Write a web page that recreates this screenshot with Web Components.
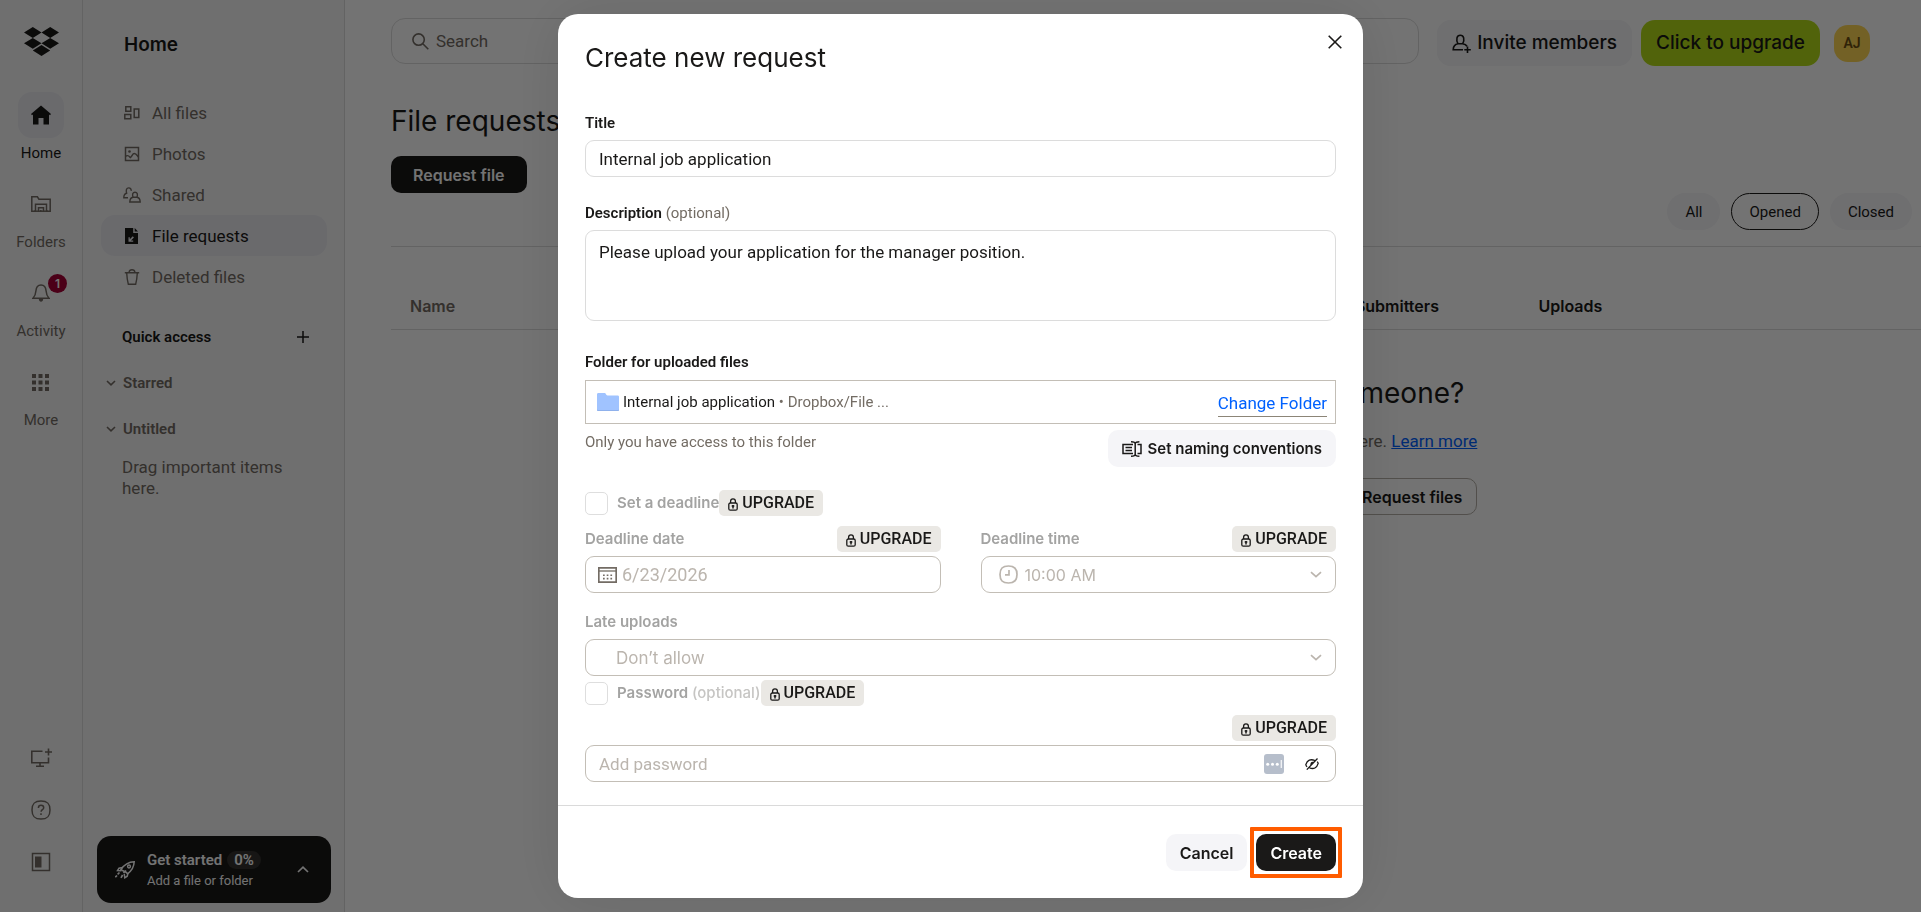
<!DOCTYPE html>
<html lang="en">
<head>
<meta charset="utf-8">
<title>File requests - Dropbox</title>
<style>
  html, body {
    height: 100%;
    margin: 0;
  }

  body {
    --display: Inter, "Liberation Sans", sans-serif;
    --text: Roboto, "Liberation Sans", sans-serif;
    --ink: #1a1918;
    --muted: #736c64;
    --faint: #bbb5ae;
    --line: #dcdcdc;
    --line-strong: #c3beb6;
    --blue: #0061fe;
    --wash: #f5f5f8;

    overflow: hidden;
    color: var(--ink);
    font: 17px/20px var(--text);
  }
</style>
</head>
<body>
<file-requests-app></file-requests-app>

<script>
const ICONS = {
  logo: `<svg viewBox="0 0 35 29" width="35" height="29" fill="currentColor"><path d="M8.800 0 17.500 5.500 8.800 11 0 5.500zM26.200 0 35 5.500 26.200 11 17.500 5.500zM0 16.300 8.800 10.900 17.500 16.300 8.800 21.800zM26.200 10.900 35 16.300 26.200 21.800 17.500 16.300zM8.800 23.600 17.500 18.100 26.200 23.600 17.500 29z"/></svg>`,
  home: `<svg viewBox="0 0 20 20" width="20" height="20" fill="currentColor"><path d="M10 .5 20 9l-1 1.300-1-.8V19.500h-5.500V13h-5v6.500H2V9.500l-1 .8L0 9z"/></svg>`,
  folders: `<svg viewBox="0 0 20 16" width="20" height="16" fill="none" stroke="currentColor" stroke-width="1.500"><path d="M4 15.200H.8V.8h5.600l1.500 2.400h11.300v12H16"/><path d="M4.500 16V8.200h11V16M7.500 16v-4.300h5V16M9.800 16v-2"/><path d="M3 15.200h14"/></svg>`,
  bell: `<svg viewBox="0 0 18 18" width="18" height="18" fill="none" stroke="currentColor" stroke-width="1.500"><path d="M1 14.200c1.700-1.600 2.600-3 2.900-7.200C4.200 2.800 6 .9 9 .9S13.800 2.800 14.100 7c.3 4.200 1.200 5.600 2.900 7.200z"/><path d="M6.800 15h4.400c-.2 1.800-1 2.700-2.200 2.700S7 16.800 6.800 15z" fill="currentColor" stroke="none"/></svg>`,
  grid: `<svg viewBox="0 0 17 17" width="17" height="17" fill="currentColor"><path d="M0 0h4v4H0zM6.500 0h4v4h-4zM13 0h4v4h-4zM0 6.500h4v4H0zM6.500 6.500h4v4h-4zM13 6.500h4v4h-4zM0 13h4v4H0zM6.500 13h4v4h-4zM13 13h4v4h-4z"/></svg>`,
  screen: `<svg viewBox="0 0 22 20" width="22" height="20" fill="none" stroke="currentColor" stroke-width="1.600"><path d="M12.500 3.300H1.800v11.400h16.700V9.500"/><path d="M10 14.700v3M6 18.200h8M18.500.5v7M15 4h7"/></svg>`,
  help: `<svg viewBox="0 0 20 20" width="20" height="20" fill="none" stroke="currentColor" stroke-width="1.500"><path d="M10 1c6.500 0 9 2.500 9 9s-2.500 9-9 9-9-2.500-9-9 2.500-9 9-9z"/><path d="M7.400 8c0-1.700 1-2.700 2.600-2.700s2.700.9 2.700 2.400c0 2-2.600 2-2.600 4.100M10 13.300v1.700"/></svg>`,
  panel: `<svg viewBox="0 0 20 20" width="20" height="20"><path d="M1.500 1.500h17v17h-17z" fill="none" stroke="currentColor" stroke-width="1.500"/><path d="M4 4.500h6.500v11H4z" fill="currentColor"/></svg>`,
  files: `<svg viewBox="0 0 16 14" width="16" height="14" fill="none" stroke="currentColor" stroke-width="1.500"><path d="M1.800.8h5v4.400h-5zM.8 8.600h6v4.200h-6zM10.200 3h4.600v8.500h-4.600z"/></svg>`,
  photos: `<svg viewBox="0 0 16 16" width="16" height="16" fill="none" stroke="currentColor" stroke-width="1.500"><path d="M1.500 1.500h13v13h-13zM1.500 10.500c2.500-2 3.500-.5 4.800 1 2-1.200 2-4 4-4s2.500 1.500 4 3.500"/><circle cx="5.500" cy="5.500" r="1.300" fill="currentColor" stroke="none"/></svg>`,
  shared: `<svg viewBox="0 0 18 16" width="18" height="16" fill="none" stroke="currentColor" stroke-width="1.400"><path d="M5 10.700H.8C.8 8 1.700 6.600 3.600 6.200 2.800 3 3.500.9 5.700.9c1.800 0 2.600 1.200 2.500 3"/><path d="M10 10.300C9 7 9.800 5.200 12 5.200s3 1.800 2 5.100c2.200.3 3.100 1.700 3.200 4.700H6.800c.1-3 1-4.400 3.200-4.700zM10 10.300h4"/></svg>`,
  request: `<svg viewBox="0 0 14 16" width="14" height="16" fill="currentColor"><path fill-rule="evenodd" d="M0 0h8.200v5H13v11H0zM7.800 8.300 4.800 11.300V9.200H3.500v4.600h4.700v-1.300H6L8.900 9.400z"/><path d="M9.700 0 13 3.500H9.700z"/></svg>`,
  trash: `<svg viewBox="0 0 16 16" width="16" height="16" fill="none" stroke="currentColor" stroke-width="1.400"><path d="M.8 3.700h14.400M5 3.500C5.300 1.600 6 .8 8 .8s2.700.8 3 2.700M2.700 4c.2 4 .8 8 1.600 11.200h7.400C12.500 12 13.100 8 13.300 4"/></svg>`,
  plus: `<svg viewBox="0 0 12 12" width="12" height="12" fill="none" stroke="currentColor" stroke-width="1.500"><path d="M6 0v12M0 6h12"/></svg>`,
  down: `<svg viewBox="0 0 10 6" width="10" height="6" fill="none" stroke="currentColor" stroke-width="1.600"><path d="m1 1 4 3.800L9 1"/></svg>`,
  up: `<svg viewBox="0 0 12 7" width="12" height="7" fill="none" stroke="currentColor" stroke-width="1.700"><path d="m1 6 5-4.800L11 6"/></svg>`,
  rocket: `<svg viewBox="0 0 20 18" width="20" height="18" fill="none" stroke="currentColor" stroke-width="1.500"><path d="M6 8.500C9 4 13.500 1 19.200.8 19 6 16.500 10 12.500 12.800L11 11.200 8 9.800z"/><path d="M7.500 6.500 4 7.200 2.500 9.500l4 .3M13 12l-.8 3.200-2.400 1.600-.6-4"/><circle cx="14" cy="5.500" r="1.400"/><path d="M11 9.500 8.500 12M4.500 11.500 2.600 13.300M2 14.500.3 16.200M7.600 14 6 16.800" stroke-width="1.700"/></svg>`,
  search: `<svg viewBox="0 0 17 17" width="17" height="17" fill="none" stroke="currentColor" stroke-width="1.600"><circle cx="6.600" cy="6.600" r="5.700"/><path d="m10.800 10.800 5.500 5.500"/></svg>`,
  invite: `<svg viewBox="0 0 19 19" width="19" height="19" fill="none" stroke="currentColor" stroke-width="1.600"><path d="M11 15.700H1.200C1.300 12 2.600 10.400 6 9.800 3.700 5.500 4.800 1.200 8.300 1.200s4.700 4.300 2.300 8.600c2.200.4 3.500 1 4.400 2.400M6 9.800h4.600M15.500 12.500V19M12.300 15.700h6.500"/></svg>`,
  close: `<svg viewBox="0 0 14 14" width="14" height="14" fill="none" stroke="currentColor" stroke-width="1.600"><path d="m.7.7 12.600 12.600M13.300.7.7 13.300"/></svg>`,
  folder: `<svg viewBox="0 0 22 18" width="22" height="18"><path d="M0 1.500C0 .5.500 0 1.500 0h6c.8 0 1 .5 1.500 1.300.4.700.7 1.200 1.500 1.200h10c1 0 1.500.5 1.500 1.500v12.500c0 1-.5 1.500-1.500 1.500h-19C.5 18 0 17.500 0 16.500z" fill="#a0c3ff"/><path d="M0 16v.500c0 1 .5 1.500 1.500 1.500h19c1 0 1.500-.5 1.500-1.500V16c0 .7-.5 1-1.500 1h-19C.5 17 0 16.700 0 16z" fill="#8fb1ec"/></svg>`,
  naming: `<svg viewBox="0 0 20 16" width="20" height="16" fill="none" stroke="currentColor" stroke-width="1.500"><path d="M11 12.500H1v-9h10M3.500 6.500H10M3.500 9.500H10M15.500 3.500H19v9h-3.500"/><path d="M9 .8c2.500 0 4.200.4 4.200 2v10.400c0 1.600-1.700 2-4.200 2M17.400.8c-2.500 0-4.200.4-4.200 2v10.400c0 1.600 1.700 2 4.200 2"/></svg>`,
  lock: `<svg viewBox="0 0 10 13" width="10" height="13" fill="none" stroke="currentColor" stroke-width="1.300"><rect x=".8" y="5" width="8.400" height="7.200" rx="1.500"/><path d="M2.600 5V3.300C2.600 1.600 3.400.8 5 .8s2.400.8 2.400 2.500V5"/><path d="M5 7v3.500M3.700 8.100h2.600" stroke-width="1.500"/></svg>`,
  calendar: `<svg viewBox="0 0 19 16" width="19" height="16" fill="none" stroke="currentColor" stroke-width="1.700"><path d="M.8.8h17.400v14.400H.8z"/><path d="M.8 4h17.400" stroke-width="1.300"/><path d="M5 8.300h9.500M5 11.600h9.500" stroke-width="1.600" stroke-dasharray="1.700 2"/></svg>`,
  clock: `<svg viewBox="0 0 19 19" width="19" height="19" fill="none" stroke="currentColor" stroke-width="1.700"><path d="M9.500 1c6 0 8.500 2.500 8.500 8.500s-2.500 8.500-8.500 8.500S1 15.500 1 9.500 3.500 1 9.500 1z"/><path d="M10 5v4.800H6"/></svg>`,
  chevron: `<svg viewBox="0 0 12 8" width="12" height="8" fill="none" stroke="currentColor" stroke-width="1.700"><path d="m1 1.200 5 4.500 5-4.500"/></svg>`,
  dots: `<svg viewBox="0 0 20 20" width="20" height="20"><rect width="20" height="20" rx="3" fill="#b6becb"/><g fill="#fff"><circle cx="3.700" cy="10.200" r="1.500"/><circle cx="8.500" cy="10.200" r="1.500"/><circle cx="13.300" cy="10.200" r="1.500"/><path d="M16.700 6h1.100v8h-1.100z"/></g></svg>`,
  hidden: `<svg viewBox="0 0 14 12" width="14" height="12" fill="none" stroke="currentColor" stroke-width="1.300"><path d="M10 2.500C5.500.8 2.300 2 .8 6.600c.3 1 .7 1.700 1.300 2.300M4.500 9.900c4.200 1.500 7.300.2 8.700-4.500-.2-.6-.6-1.200-1-1.700M1.800 11.600 12.500.5"/><path d="M8.800 4 5.500 7.500C4.800 5 6.500 3.200 8.800 4z" fill="currentColor" stroke="none"/></svg>`
};

class BaseElement extends HTMLElement {
  connectedCallback() {
    if (this.shadowRoot) return;
    this.attachShadow({ mode: "open" });
    this.shadowRoot.innerHTML = `
      <style>
        * { box-sizing: border-box; }
        svg { display: block; flex: none; }
        button, input, select, textarea { font: inherit; color: inherit; margin: 0; }
        button { cursor: pointer; }
        ${this.css()}
      </style>
      ${this.template()}
    `;
  }

  attr(name) {
    return this.getAttribute(name) || "";
  }

  css() { return ""; }
  template() { return "<slot></slot>"; }
}

class AppIcon extends BaseElement {
  css() { return ":host { display: block; flex: none; }"; }
  template() { return ICONS[this.attr("name")].replace("<svg", '<svg aria-hidden="true"'); }
}

class AppButton extends BaseElement {
  css() {
    return `
      :host { display: block; flex: none; }
      button {
        display: flex;
        align-items: center;
        gap: 6px;
        height: 37px;
        padding: 0 14px;
        border: 0;
        border-radius: 10px;
        background: var(--wash);
        color: var(--ink);
        font: 600 16px/20px var(--display);
        white-space: nowrap;
      }
      .primary { background: var(--ink); color: #fff; }
      .wide { padding: 0 22px; }
      .outline { background: none; border: 1px solid #b5b0a8; }
      .small { font-size: 15px; }
      .large { height: 46px; padding: 0 15px; border-radius: 14px; font-size: 19px; font-weight: 500; }
      .lime { background: #b4dc19; }
    `;
  }

  template() {
    return `<button type="button" class="${this.attr("kind")}"><slot name="icon"></slot><slot></slot></button>`;
  }
}

class RailItem extends BaseElement {
  css() {
    return `
      :host { display: block; }
      a {
        display: flex;
        flex-direction: column;
        align-items: center;
        gap: 5px;
        color: var(--muted);
        font-size: 15px;
        text-decoration: none;
      }
      .box {
        position: relative;
        display: grid;
        place-items: center;
        width: 46px;
        height: 46px;
        border-radius: 14px;
      }
      .active { color: var(--ink); }
      .active .box { background: #ebebf0; }
      .badge {
        position: absolute;
        top: 4px;
        right: -3px;
        width: 19px;
        border-radius: 50%;
        background: #a60035;
        color: #fff;
        font: 600 12px/19px var(--display);
        text-align: center;
      }
    `;
  }

  template() {
    const badge = this.hasAttribute("badge") ? `<span class="badge">${this.attr("badge")}</span>` : "";
    return `
      <a href="#" class="${this.hasAttribute("active") ? "active" : ""}">
        <span class="box"><app-icon name="${this.attr("icon")}"></app-icon>${badge}</span>
        <slot></slot>
      </a>
    `;
  }
}

class AppRail extends BaseElement {
  css() {
    return `
      :host {
        display: flex;
        flex-direction: column;
        align-items: center;
        width: 83px;
        padding: 27px 0 38px;
        border-right: 1px solid var(--line);
        background: #f7f7f7;
        box-sizing: border-box;
      }
      nav { display: grid; gap: 18px; margin-top: 36px; }
      .tools { display: grid; gap: 28px; margin-top: auto; }
      .tools button {
        display: grid;
        place-items: center;
        width: 24px;
        height: 24px;
        padding: 0;
        border: 0;
        background: none;
        color: var(--muted);
      }
    `;
  }

  template() {
    return `
      <app-icon name="logo"></app-icon>
      <nav>
        <rail-item icon="home" active>Home</rail-item>
        <rail-item icon="folders">Folders</rail-item>
        <rail-item icon="bell" badge="1">Activity</rail-item>
        <rail-item icon="grid">More</rail-item>
      </nav>
      <div class="tools">
        <button type="button" aria-label="Install app"><app-icon name="screen"></app-icon></button>
        <button type="button" aria-label="Help"><app-icon name="help"></app-icon></button>
        <button type="button" aria-label="Toggle sidebar"><app-icon name="panel"></app-icon></button>
      </div>
    `;
  }
}

class NavItem extends BaseElement {
  css() {
    return `
      :host { display: block; }
      a {
        display: flex;
        align-items: center;
        gap: 11px;
        height: 41px;
        padding-left: 22px;
        border-radius: 14px;
        color: var(--muted);
        text-decoration: none;
      }
      .icon { display: grid; place-items: center; width: 18px; }
      .active { background: #ebebf0; color: var(--ink); }
    `;
  }

  template() {
    return `
      <a href="#" class="${this.hasAttribute("active") ? "active" : ""}">
        <span class="icon"><app-icon name="${this.attr("icon")}"></app-icon></span>
        <slot></slot>
      </a>
    `;
  }
}

class GetStarted extends BaseElement {
  css() {
    return `
      :host { display: block; }
      button {
        display: flex;
        align-items: center;
        gap: 12px;
        width: 100%;
        height: 67px;
        padding: 0 22px 0 18px;
        border: 0;
        border-radius: 14px;
        background: var(--ink);
        color: #fff;
        text-align: left;
      }
      .copy { flex: 1; display: grid; gap: 4px; }
      .head { display: flex; gap: 5px; font-weight: 600; font-size: 15px; line-height: 18px; }
      .pill { padding: 0 7px; border-radius: 9px; background: #33322f; }
      small { font-size: 13px; line-height: 16px; }
    `;
  }

  template() {
    return `
      <button type="button">
        <app-icon name="rocket"></app-icon>
        <span class="copy">
          <span class="head"><span>Get started</span><span class="pill">0%</span></span>
          <small>Add a file or folder</small>
        </span>
        <app-icon name="up"></app-icon>
      </button>
    `;
  }
}

class AppSidebar extends BaseElement {
  css() {
    return `
      :host {
        display: flex;
        flex-direction: column;
        width: 262px;
        padding: 33px 13px 9px 14px;
        border-right: 1px solid var(--line);
        background: #f7f7f7;
        box-sizing: border-box;
      }
      h1 { margin: 0 0 35px 27px; font: 600 19px/24px var(--display); }
      nav { margin: 0 4px; }
      .quick {
        display: flex;
        align-items: center;
        justify-content: space-between;
        margin: 30px 22px 0 25px;
        font-size: 15px;
        font-weight: 600;
      }
      h2 { margin: 0; font: inherit; }
      button { padding: 0; border: 0; background: none; }
      .group {
        display: flex;
        align-items: center;
        gap: 7px;
        margin: 26px 0 0 9px;
        color: var(--muted);
        font-size: 15px;
        font-weight: 600;
      }
      p { margin: 18px 25px 0; color: var(--muted); line-height: 21px; }
      get-started { margin-top: auto; }
    `;
  }

  template() {
    return `
      <h1>Home</h1>
      <nav>
        <nav-item icon="files">All files</nav-item>
        <nav-item icon="photos">Photos</nav-item>
        <nav-item icon="shared">Shared</nav-item>
        <nav-item icon="request" active>File requests</nav-item>
        <nav-item icon="trash">Deleted files</nav-item>
      </nav>
      <div class="quick">
        <h2>Quick access</h2>
        <button type="button" aria-label="Add section"><app-icon name="plus"></app-icon></button>
      </div>
      <button type="button" class="group"><app-icon name="down"></app-icon>Starred</button>
      <button type="button" class="group"><app-icon name="down"></app-icon>Untitled</button>
      <p>Drag important items here.</p>
      <get-started></get-started>
    `;
  }
}

class TopBar extends BaseElement {
  css() {
    return `
      :host { display: flex; gap: 18px; margin-right: 51px; }
      label {
        flex: 1;
        display: flex;
        align-items: center;
        gap: 7px;
        height: 46px;
        padding: 0 20px;
        border: 1px solid var(--line);
        border-radius: 14px;
        color: var(--muted);
      }
      input { flex: 1; padding: 0; border: 0; outline: 0; background: none; }
      input::placeholder { color: var(--muted); opacity: 1; }
      .actions { display: flex; align-items: center; gap: 9px; padding-top: 2px; }
      .avatar {
        width: 36px;
        height: 37px;
        margin-left: 5px;
        padding: 0;
        border: 0;
        border-radius: 14px;
        background: #ffd754;
        color: #6b4e12;
        font: 600 14px/20px var(--text);
      }
    `;
  }

  template() {
    return `
      <label><app-icon name="search"></app-icon><input type="search" placeholder="Search" aria-label="Search"></label>
      <div class="actions">
        <app-button kind="large"><app-icon slot="icon" name="invite"></app-icon>Invite members</app-button>
        <app-button kind="large lime">Click to upgrade</app-button>
        <button type="button" class="avatar">AJ</button>
      </div>
    `;
  }
}

class RequestsPage extends BaseElement {
  css() {
    return `
      :host { display: block; padding: 18px 0 0 46px; background: #fff; }
      h1 { margin: 37px 0 17px; font: 400 28px/36px var(--display); }
      .filters { display: flex; justify-content: flex-end; gap: 11px; padding: 0 9px 16px 0; }
      .filters button {
        height: 37px;
        padding: 0 17px;
        border: 1px solid transparent;
        border-radius: 19px;
        background: var(--wash);
        font-size: 15px;
      }
      .filters .on { border-color: var(--ink); background: none; }
      table { width: 100%; border-collapse: collapse; table-layout: fixed; }
      tr { border: solid var(--line); border-width: 1px 0; }
      th { padding: 49px 0 13px; font: 600 16px/20px var(--display); text-align: left; }
      th:first-child { width: 63%; padding-left: 19px; color: var(--muted); }
      th:nth-child(2) { width: 12%; }
      .empty { display: flex; flex-direction: column; align-items: flex-end; margin: 45px 29% 0 0; }
      h2 { margin: 0 13px 20px 0; font: 400 28px/36px var(--display); }
      p { margin: 0 0 27px; color: var(--muted); }
      a { color: var(--blue); }
    `;
  }

  template() {
    return `
      <top-bar></top-bar>
      <h1>File requests</h1>
      <app-button kind="primary wide">Request file</app-button>
      <div class="filters">
        <button type="button">All</button>
        <button type="button" class="on">Opened</button>
        <button type="button">Closed</button>
      </div>
      <table>
        <thead>
          <tr><th scope="col">Name</th><th scope="col">Submitters</th><th scope="col">Uploads</th></tr>
        </thead>
      </table>
      <div class="empty">
        <h2>someone?</h2>
        <p>here. <a href="#">Learn more</a></p>
        <app-button kind="outline">Request files</app-button>
      </div>
    `;
  }
}

class UpgradeChip extends BaseElement {
  css() {
    return `
      :host { display: block; flex: none; }
      a {
        display: flex;
        align-items: center;
        gap: 4px;
        height: 26px;
        padding: 0 9px;
        border-radius: 5px;
        background: #eae8e4;
        color: var(--ink);
        font-size: 16px;
        font-weight: 500;
        text-decoration: none;
      }
      app-icon { padding-top: 2px; }
    `;
  }

  template() {
    return `<a href="#"><app-icon name="lock"></app-icon>UPGRADE</a>`;
  }
}

// Labelled control; "type" picks text, textarea, select or password.
class FormField extends BaseElement {
  css() {
    return `
      :host { display: block; }
      .top { display: flex; align-items: center; justify-content: space-between; margin-bottom: 7px; }
      .top.chip { margin-bottom: 4px; }
      .top.end { justify-content: flex-end; }
      label { font-size: 15px; font-weight: 600; }
      label span { color: var(--muted); font-weight: 400; }
      .box {
        display: flex;
        align-items: center;
        gap: 5px;
        min-height: 37px;
        padding: 0 13px;
        border: 1px solid var(--line);
        border-radius: 9px;
        background: #fff;
      }
      input, select, textarea {
        flex: 1;
        min-width: 0;
        padding: 0;
        border: 0;
        outline: 0;
        background: none;
        appearance: none;
        resize: none;
      }
      textarea { display: block; height: 89px; padding: 11px 0; }
      .off label { color: #a3a3a2; font: 600 15px/20px var(--display); }
      .off .box { border-color: var(--line-strong); }
      .off input, .off select { color: var(--faint); opacity: 1; }
      .off select { font: 16px/20px var(--display); }
      input::placeholder { color: var(--faint); opacity: 1; }
      .select { padding-left: 17px; color: var(--faint); }
      .select.bare { padding-left: 30px; }
      .select select { margin-left: 2px; }
      .date { padding-left: 12px; color: var(--muted); }
      .date input { font-size: 18px; }
      .off .bare select { margin: 0; font-size: 17px; }
      .box button { padding: 0; border: 0; background: none; color: var(--ink); }
      .box app-icon + button { margin: 0 3px 0 16px; }
    `;
  }

  control() {
    const value = this.attr("value");
    const disabled = this.hasAttribute("disabled") ? "disabled" : "";
    const icon = this.hasAttribute("icon") ? `<app-icon name="${this.attr("icon")}"></app-icon>` : "";

    switch (this.attr("type")) {
      case "textarea":
        return `<div class="box"><textarea id="field">${value}</textarea></div>`;
      case "select":
        return `
          <div class="box select ${icon ? "" : "bare"}">
            ${icon}
            <select id="field" ${disabled}><option>${value}</option></select>
            <app-icon name="chevron"></app-icon>
          </div>`;
      case "password":
        return `
          <div class="box">
            <input id="field" type="password" placeholder="Add password" aria-label="Add password" ${disabled}>
            <app-icon name="dots"></app-icon>
            <button type="button" aria-label="Show password"><app-icon name="hidden"></app-icon></button>
          </div>`;
      default:
        return `<div class="box ${icon ? "date" : ""}">${icon}<input id="field" type="text" value="${value}" ${disabled}></div>`;
    }
  }

  template() {
    const label = this.attr("label");
    const chip = this.hasAttribute("upgrade");
    const note = this.hasAttribute("optional") ? " <span>(optional)</span>" : "";
    return `
      <div class="${this.hasAttribute("disabled") ? "off" : ""}">
        <div class="top ${chip ? "chip" : ""} ${label ? "" : "end"}">
          ${label ? `<label for="field">${label}${note}</label>` : ""}
          ${chip ? "<upgrade-chip></upgrade-chip>" : ""}
        </div>
        ${this.control()}
      </div>
    `;
  }
}

class CheckRow extends BaseElement {
  css() {
    return `
      :host { display: flex; align-items: center; height: 26px; }
      input {
        width: 23px;
        height: 23px;
        margin-right: 9px;
        border: 1px solid #dedede;
        border-radius: 5px;
        background: #fff;
        appearance: none;
      }
      label { color: #a3a3a2; font: 600 15px/20px var(--display); }
      label span { color: #c6c5c3; font-weight: 500; }
    `;
  }

  template() {
    const note = this.hasAttribute("optional") ? " <span>(optional)</span>" : "";
    return `
      <input type="checkbox" id="check" disabled>
      <label for="check"><slot></slot>${note}</label>
      <upgrade-chip></upgrade-chip>
    `;
  }
}

class FolderPicker extends BaseElement {
  css() {
    return `
      :host { display: block; }
      h3 { margin: 0 0 8px; font-size: 15px; font-weight: 600; line-height: 20px; }
      .box {
        display: flex;
        align-items: center;
        gap: 4px;
        height: 44px;
        padding: 0 8px 0 11px;
        border: 1px solid var(--line-strong);
      }
      .path { flex: 1; font-size: 15px; }
      .path span, .note { color: var(--muted); }
      a {
        padding: 5px 0 3px;
        border-bottom: 1px solid #8c8577;
        color: var(--blue);
        text-decoration: none;
      }
      .row { display: flex; align-items: flex-start; justify-content: space-between; margin-top: 6px; }
      .note { padding-top: 2px; font-size: 15px; }
    `;
  }

  template() {
    return `
      <h3>Folder for uploaded files</h3>
      <div class="box">
        <app-icon name="folder"></app-icon>
        <div class="path">Internal job application <span>• Dropbox/File ...</span></div>
        <a href="#">Change Folder</a>
      </div>
      <div class="row">
        <div class="note">Only you have access to this folder</div>
        <app-button kind="small"><app-icon slot="icon" name="naming"></app-icon>Set naming conventions</app-button>
      </div>
    `;
  }
}

class RequestDialog extends BaseElement {
  css() {
    return `
      :host {
        position: fixed;
        inset: 0;
        display: flex;
        align-items: center;
        justify-content: center;
        background: rgba(0, 0, 0, 0.55);
      }
      section {
        width: 90%;
        max-width: 805px;
        border-radius: 20px;
        background: #fff;
        box-shadow: 0 0 60px rgba(0, 0, 0, 0.1);
      }
      header {
        display: flex;
        align-items: flex-start;
        justify-content: space-between;
        padding: 21px 21px 0 27px;
      }
      h2 { margin: 7px 0 0; font: 400 26px/32px var(--display); }
      .close { padding: 0; border: 0; background: none; }
      .body { padding: 39px 27px 23px; border-bottom: 1px solid #dadada; }
      .description { margin-top: 26px; }
      folder-picker { margin-top: 31px; }
      .deadline { margin-top: 23px; }
      .pair { display: grid; grid-template-columns: 1fr 1fr; gap: 40px; margin-top: 10px; }
      .late { margin-top: 19px; }
      .protect { margin-top: 4px; }
      .password { margin-top: 9px; }
      footer { display: flex; justify-content: flex-end; gap: 9px; padding: 28px 27px 27px; }
      .mark { position: relative; }
      .mark::after {
        content: "";
        position: absolute;
        inset: -7px -6px;
        border: 4px solid #ff5c00;
        border-radius: 1px;
        pointer-events: none;
      }
    `;
  }

  template() {
    return `
      <section role="dialog" aria-modal="true" aria-labelledby="heading">
        <header>
          <h2 id="heading">Create new request</h2>
          <button type="button" class="close" aria-label="Close"><app-icon name="close"></app-icon></button>
        </header>
        <div class="body">
          <form-field label="Title" value="Internal job application"></form-field>
          <form-field class="description" type="textarea" label="Description" optional
            value="Please upload your application for the manager position."></form-field>
          <folder-picker></folder-picker>
          <check-row class="deadline">Set a deadline</check-row>
          <div class="pair">
            <form-field label="Deadline date" icon="calendar" value="6/23/2026" upgrade disabled></form-field>
            <form-field type="select" label="Deadline time" icon="clock" value="10:00 AM" upgrade disabled></form-field>
          </div>
          <form-field class="late" type="select" label="Late uploads" value="Don’t allow" disabled></form-field>
          <check-row class="protect" optional>Password</check-row>
          <form-field class="password" type="password" upgrade disabled></form-field>
        </div>
        <footer>
          <app-button>Cancel</app-button>
          <app-button class="mark" kind="primary">Create</app-button>
        </footer>
      </section>
    `;
  }
}

class FileRequestsApp extends BaseElement {
  css() {
    return `
      :host { display: flex; height: 100vh; }
      app-rail, app-sidebar { flex: none; }
      requests-page { flex: 1; min-width: 0; }
    `;
  }

  template() {
    return `
      <app-rail></app-rail>
      <app-sidebar></app-sidebar>
      <requests-page></requests-page>
      <request-dialog></request-dialog>
    `;
  }
}

customElements.define("app-icon", AppIcon);
customElements.define("app-button", AppButton);
customElements.define("rail-item", RailItem);
customElements.define("app-rail", AppRail);
customElements.define("nav-item", NavItem);
customElements.define("get-started", GetStarted);
customElements.define("app-sidebar", AppSidebar);
customElements.define("top-bar", TopBar);
customElements.define("requests-page", RequestsPage);
customElements.define("upgrade-chip", UpgradeChip);
customElements.define("form-field", FormField);
customElements.define("check-row", CheckRow);
customElements.define("folder-picker", FolderPicker);
customElements.define("request-dialog", RequestDialog);
customElements.define("file-requests-app", FileRequestsApp);
</script>
</body>
</html>
